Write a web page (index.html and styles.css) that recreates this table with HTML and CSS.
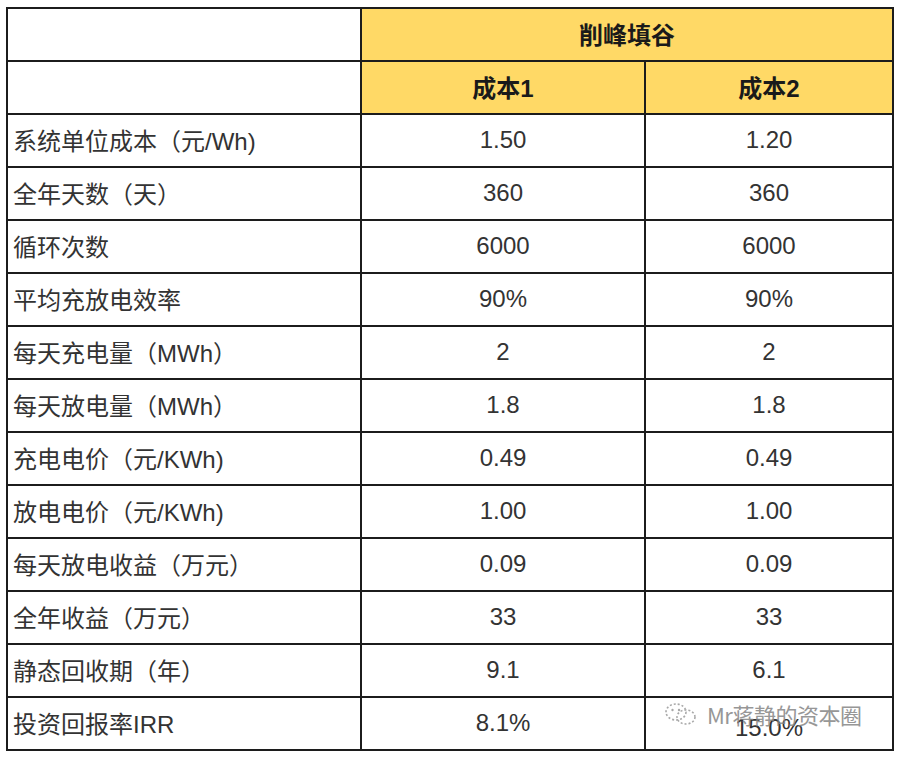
FILE: index.html
```html
<!DOCTYPE html>
<html lang="zh-CN">
<head>
<meta charset="utf-8">
<title>削峰填谷</title>
<link rel="stylesheet" href="styles.css">
</head>
<body>
<div class="wrap">
<table class="tbl">
  <colgroup>
    <col class="c1">
    <col class="c2">
    <col class="c3">
  </colgroup>
  <tr class="head">
    <td class="blank"></td>
    <td class="hd" colspan="2">削峰填谷</td>
  </tr>
  <tr class="head">
    <td class="blank"></td>
    <td class="hd">成本1</td>
    <td class="hd">成本2</td>
  </tr>
  <tr><td class="lbl">系统单位成本（元/Wh)</td><td class="num">1.50</td><td class="num">1.20</td></tr>
  <tr><td class="lbl">全年天数（天）</td><td class="num">360</td><td class="num">360</td></tr>
  <tr><td class="lbl">循环次数</td><td class="num">6000</td><td class="num">6000</td></tr>
  <tr><td class="lbl">平均充放电效率</td><td class="num">90%</td><td class="num">90%</td></tr>
  <tr><td class="lbl">每天充电量（MWh）</td><td class="num">2</td><td class="num">2</td></tr>
  <tr><td class="lbl">每天放电量（MWh）</td><td class="num">1.8</td><td class="num">1.8</td></tr>
  <tr><td class="lbl">充电电价（元/KWh)</td><td class="num">0.49</td><td class="num">0.49</td></tr>
  <tr><td class="lbl">放电电价（元/KWh)</td><td class="num">1.00</td><td class="num">1.00</td></tr>
  <tr><td class="lbl">每天放电收益（万元）</td><td class="num">0.09</td><td class="num">0.09</td></tr>
  <tr><td class="lbl">全年收益（万元）</td><td class="num">33</td><td class="num">33</td></tr>
  <tr><td class="lbl">静态回收期（年）</td><td class="num">9.1</td><td class="num">6.1</td></tr>
  <tr><td class="lbl">投资回报率IRR</td><td class="num">8.1%</td><td class="num low">15.0%</td></tr>
</table>
<div class="watermark">
  <svg class="wm-icon" width="34" height="24" viewBox="0 0 34 24">
    <ellipse cx="12" cy="10" rx="10" ry="8" fill="none" stroke="#9a9a9a" stroke-width="1.6" stroke-dasharray="2 2"/>
    <ellipse cx="22" cy="15" rx="9" ry="7" fill="none" stroke="#9a9a9a" stroke-width="1.6" stroke-dasharray="2 2"/>
    <circle cx="8.5" cy="8" r="1.2" fill="#9a9a9a"/>
    <circle cx="15" cy="8" r="1.2" fill="#9a9a9a"/>
  </svg>
  <span class="wm-text">Mr蒋静的资本圈</span>
</div>
</div>
</body>
</html>
```

FILE: styles.css
```css
html, body {
  margin: 0;
  padding: 0;
  background: #ffffff;
}

.wrap {
  position: relative;
  padding: 7px 0 0 6px;
}

.tbl {
  border-collapse: collapse;
  table-layout: fixed;
  width: 886px;
  font-family: "Liberation Sans", "Noto Sans CJK SC", sans-serif;
  font-size: 24px;
  color: #333333;
}

.c1 { width: 354px; }
.c2 { width: 284px; }
.c3 { width: 248px; }

.tbl td {
  border: 2px solid #1c1c1c;
  height: 51px;
  padding: 0 0 2px 0;
  box-sizing: border-box;
  vertical-align: middle;
  white-space: nowrap;
}

.tbl tr {
  height: 53px;
}

.hd {
  background: #ffd966;
  text-align: center;
  font-weight: bold;
  color: #1a1a1a;
}

.lbl {
  padding-left: 5px !important;
  text-align: left;
}

.num {
  text-align: center;
}

.num.low {
  padding-top: 8px !important;
  padding-bottom: 0 !important;
}

.watermark {
  position: absolute;
  left: 664px;
  top: 698px;
  display: flex;
  align-items: center;
  gap: 9px;
  opacity: 0.85;
}

.wm-text {
  font-family: "Noto Sans CJK SC", sans-serif;
  font-size: 22px;
  color: #858585;
  letter-spacing: -0.5px;
}
```
